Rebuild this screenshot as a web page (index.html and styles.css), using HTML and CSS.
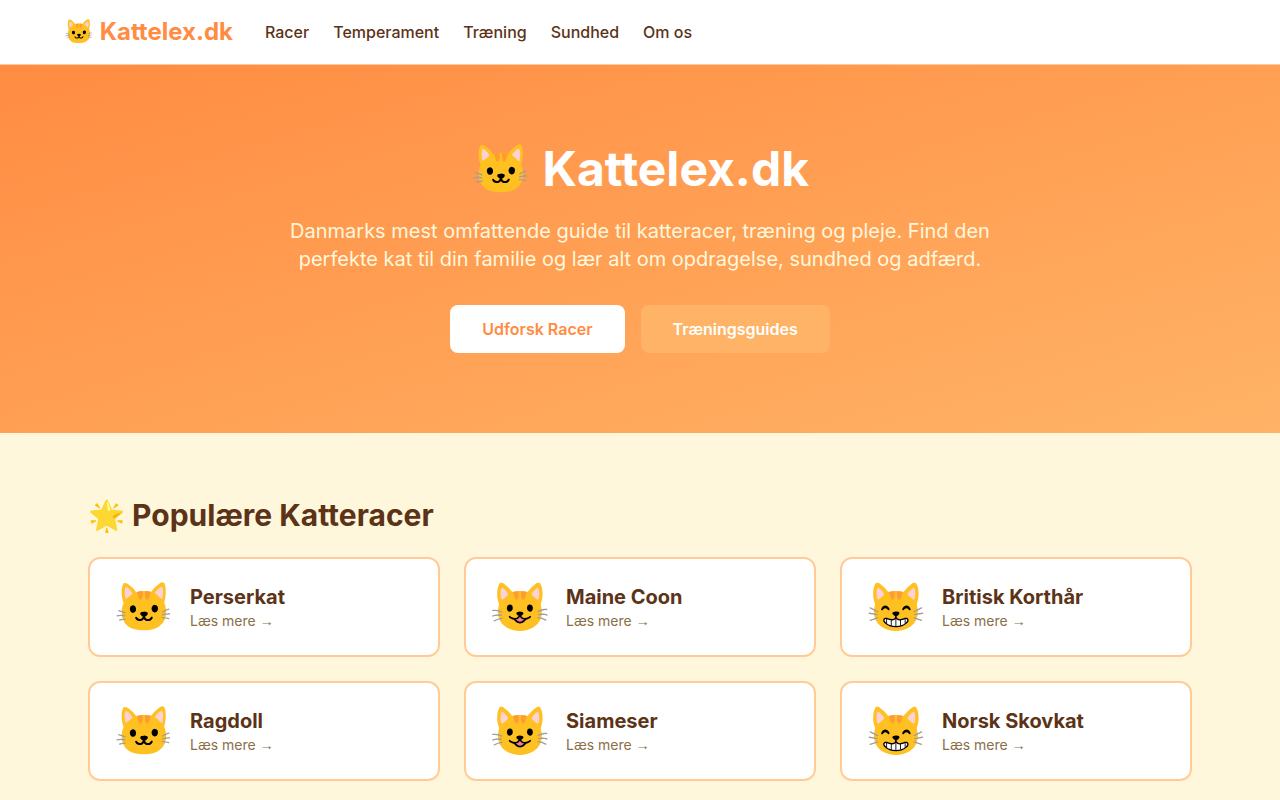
FILE: index.html
```html
<!DOCTYPE html>
<html lang="da">
<head>
    <meta charset="UTF-8">
    <meta name="viewport" content="width=device-width, initial-scale=1.0">
    <title>Kattelex.dk</title>
    <link rel="stylesheet" href="styles.css">
</head>
<body>
    <header class="site-header">
        <nav class="nav">
            <a class="logo" href="#">🐱 Kattelex.dk</a>
            <div class="nav-links">
                <a href="#">Racer</a>
                <a href="#">Temperament</a>
                <a href="#">Træning</a>
                <a href="#">Sundhed</a>
                <a href="#">Om os</a>
            </div>
        </nav>
    </header>

    <section class="hero">
        <h1>🐱 Kattelex.dk</h1>
        <p>Danmarks mest omfattende guide til katteracer, træning og pleje. Find den perfekte kat til din familie og lær alt om opdragelse, sundhed og adfærd.</p>
        <div class="hero-actions">
            <a class="btn btn-primary" href="#racer">Udforsk Racer</a>
            <a class="btn btn-secondary" href="#">Træningsguides</a>
        </div>
    </section>

    <main class="content" id="racer">
        <h2>🌟 Populære Katteracer</h2>
        <div class="breed-grid">
            <a class="breed-card" href="#">
                <span class="breed-icon">🐱</span>
                <div>
                    <h3>Perserkat</h3>
                    <p>Læs mere <span class="arrow">→</span></p>
                </div>
            </a>
            <a class="breed-card" href="#">
                <span class="breed-icon">😺</span>
                <div>
                    <h3>Maine Coon</h3>
                    <p>Læs mere <span class="arrow">→</span></p>
                </div>
            </a>
            <a class="breed-card" href="#">
                <span class="breed-icon">😸</span>
                <div>
                    <h3>Britisk Korthår</h3>
                    <p>Læs mere <span class="arrow">→</span></p>
                </div>
            </a>
            <a class="breed-card" href="#">
                <span class="breed-icon">🐱</span>
                <div>
                    <h3>Ragdoll</h3>
                    <p>Læs mere <span class="arrow">→</span></p>
                </div>
            </a>
            <a class="breed-card" href="#">
                <span class="breed-icon">😺</span>
                <div>
                    <h3>Siameser</h3>
                    <p>Læs mere <span class="arrow">→</span></p>
                </div>
            </a>
            <a class="breed-card" href="#">
                <span class="breed-icon">😸</span>
                <div>
                    <h3>Norsk Skovkat</h3>
                    <p>Læs mere <span class="arrow">→</span></p>
                </div>
            </a>
        </div>
    </main>
</body>
</html>
```

FILE: styles.css
```css
* {
    margin: 0;
    padding: 0;
    box-sizing: border-box;
}

body {
    font-family: 'Inter', sans-serif;
    background: #fff7dc;
    color: #5c3317;
    line-height: 24px;
}

a {
    color: inherit;
    text-decoration: none;
}

/* Header */
.site-header {
    background: #fff;
    border-bottom: 1px solid #ffcc99;
}

.nav {
    max-width: 1200px;
    margin: 0 auto;
    padding: 0 24px;
    height: 64px;
    display: flex;
    align-items: center;
    gap: 32px;
}

.logo {
    font-size: 24px;
    font-weight: 700;
    line-height: 32px;
    color: #ff8c42;
}

.nav-links {
    display: flex;
    gap: 24px;
    font-weight: 500;
}

/* Hero */
.hero {
    background: linear-gradient(to bottom right, #ff8c42 0%, #ffb366 100%);
    color: #fff;
    text-align: center;
    padding: 80px 24px;
}

.hero h1 {
    font-size: 48px;
    font-weight: 700;
    line-height: 48px;
    margin-bottom: 24px;
}

.hero p {
    max-width: 768px;
    margin: 0 auto 32px;
    font-size: 20px;
    line-height: 28px;
    color: #fff7dc;
}

.hero-actions {
    display: flex;
    justify-content: center;
    flex-wrap: wrap;
    gap: 16px;
}

.btn {
    padding: 12px 32px;
    border-radius: 8px;
    font-weight: 600;
}

.btn-primary {
    background: #fff;
    color: #ff8c42;
}

.btn-secondary {
    background: #ffb366;
    color: #fff;
}

/* Breeds */
.content {
    max-width: 1152px;
    margin: 0 auto;
    padding: 64px 24px;
}

.content h2 {
    font-size: 30px;
    font-weight: 700;
    line-height: 36px;
    margin-bottom: 24px;
}

.breed-grid {
    display: grid;
    grid-template-columns: repeat(auto-fill, minmax(300px, 1fr));
    gap: 24px;
}

.breed-card {
    display: flex;
    align-items: center;
    gap: 16px;
    padding: 24px;
    background: #fff;
    border: 2px solid #ffcc99;
    border-radius: 12px;
}

.breed-icon {
    font-size: 48px;
    line-height: 48px;
}

.breed-card h3 {
    font-size: 20px;
    font-weight: 700;
    line-height: 28px;
}

.breed-card p {
    font-size: 14px;
    line-height: 20px;
    color: #8b6f47;
}

.arrow {
    font-family: 'Liberation Sans', sans-serif;
}
```
